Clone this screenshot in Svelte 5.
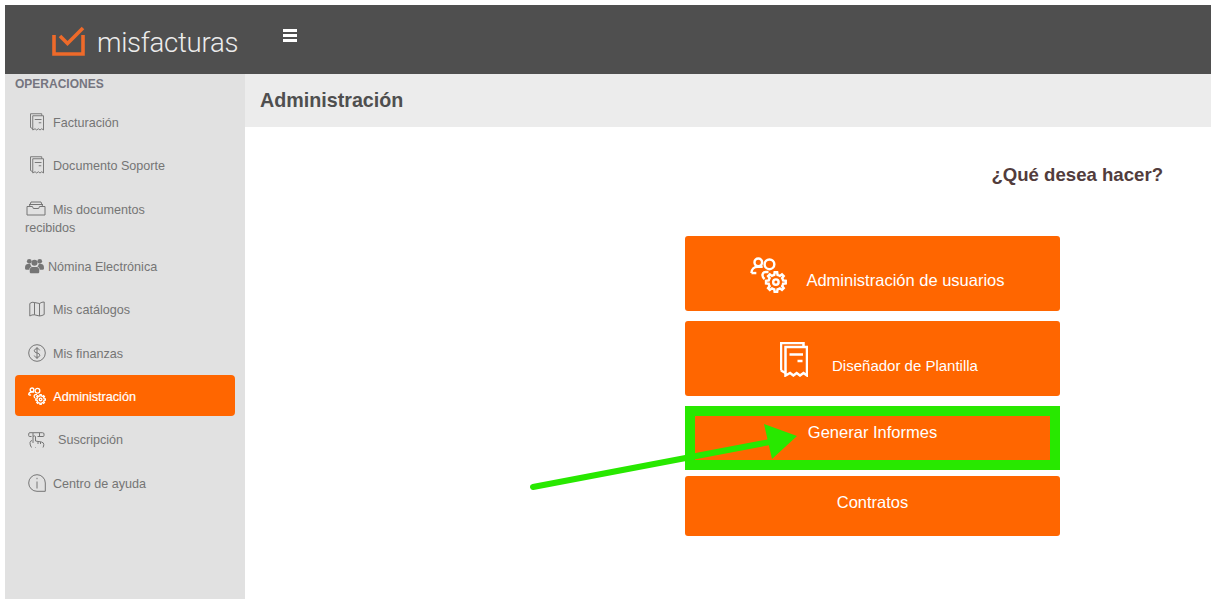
<script>
  function gearPath(cx, cy, ro, ri, n) {
    let d = '';
    const step = (Math.PI * 2) / n;
    for (let i = 0; i < n; i++) {
      const a = i * step - Math.PI / 2;
      const pts = [
        [ri, a - step * 0.5],
        [ri, a - step * 0.28],
        [ro, a - step * 0.16],
        [ro, a + step * 0.16],
        [ri, a + step * 0.28]
      ];
      for (const [r, t] of pts) {
        d += (d ? 'L' : 'M') + (cx + r * Math.cos(t)).toFixed(2) + ' ' + (cy + r * Math.sin(t)).toFixed(2);
      }
    }
    return d + 'Z';
  }
  const gear = gearPath(26.6, 25.8, 10.2, 7.6, 8);
  const items = [
    { label: 'Facturación', icon: 'receipt' },
    { label: 'Documento Soporte', icon: 'receipt' },
    { label: 'Mis documentos recibidos', icon: 'inbox', tall: true },
    { label: 'Nómina Electrónica', icon: 'people' },
    { label: 'Mis catálogos', icon: 'map' },
    { label: 'Mis finanzas', icon: 'dollar' },
    { label: 'Administración', icon: 'admin', active: true },
    { label: 'Suscripción', icon: 'hand' },
    { label: 'Centro de ayuda', icon: 'info' }
  ];
</script>

{#snippet receiptIcon(cls)}
  <svg class={cls} viewBox="0 0 28 35" aria-hidden="true">
    <path d="M1 28.500V1H23.500V5" />
    <path d="M1 28.500l4.500 2.500" />
    <path d="M5.500 33.500V5H27V33.500l-3.500-2.500-3.500 2.500-3.300-2.500-3.300 2.500-3.300-2.500z" />
    <path d="M9.500 12.500H23M17.500 19H22.500" />
  </svg>
{/snippet}

{#snippet usersGearIcon(cls)}
  <svg class={cls} viewBox="0 0 38 37" aria-hidden="true">
    <circle cx="8.500" cy="5.500" r="3.900" />
    <circle cx="20" cy="7.500" r="5" />
    <path d="M1.500 16.500c0-4 3-6.500 6.500-6.500h5" />
    <path d="M1.500 16.500h5" />
    <path d="M19 15.500h-3c-3.500 0-4.500 4.500-1 7" />
    <path d={gear} />
    <circle cx="26.600" cy="25.800" r="2.800" />
  </svg>
{/snippet}

<div class="page">
  <header class="topbar">
    <div class="brand">
      <svg class="logo" viewBox="0 0 33 30" aria-hidden="true">
        <path d="M2 9V28H31V9" />
        <path d="M8 10l7.500 7.500L31 2" />
      </svg>
      <span class="wordmark">misfacturas</span>
    </div>
    <div class="burger" aria-label="menu"><i></i><i></i><i></i></div>
  </header>

  <div class="body">
    <aside class="sidebar">
      <div class="section">OPERACIONES</div>
      <nav>
        {#each items as item}
          <div class="item {item.icon}" class:active={item.active} class:tall={item.tall}>
            <span class="line">
              {#if item.icon === 'receipt'}
                {@render receiptIcon('ic')}
              {:else if item.icon === 'admin'}
                {@render usersGearIcon('ic')}
              {:else if item.icon === 'inbox'}
                <svg class="ic" viewBox="0 0 20 15" aria-hidden="true">
                  <path d="M3.500 5 5 1h10l1.500 4M3 3.500h14M1 5.500h5.500l.8 2h5.400l.8-2H19v8.500H1z" />
                </svg>
              {:else if item.icon === 'people'}
                <svg class="ic" viewBox="0 0 20 16" aria-hidden="true">
                  <g class="solid">
                    <circle cx="4.500" cy="3" r="2.500" /><circle cx="15.500" cy="3" r="2.500" /><circle cx="10" cy="4.500" r="3.200" />
                    <path d="M0 10c0-3 1.500-4 3-4h2.500c.2 1.200.8 2 1.500 2.500-1.500.7-2.500 1.800-2.500 3.500h-3C.5 12 0 11 0 10zM20 10c0-3-1.500-4-3-4h-2.500c-.2 1.200-.8 2-1.500 2.500 1.500.7 2.500 1.800 2.500 3.500h3c1 0 1.500-1 1.500-2zM7.500 9h5c1.500 0 2.500 1.500 2.500 3.500v1.700c0 .8-.7 1.500-1.500 1.500h-7c-.8 0-1.500-.7-1.500-1.500v-1.700C5 10.500 6 9 7.500 9z" />
                  </g>
                </svg>
              {:else if item.icon === 'map'}
                <svg class="ic" viewBox="0 0 16 16" aria-hidden="true">
                  <path d="M.8 15V2.500Q3 .5 5.500 1.500L10.500 2.500Q13 .8 15.200 1V13.500Q13 14.800 10.500 15L5.500 13.800Q3 13.500.8 15zM5.500 1.500V13.800M10.500 2.500V15" />
                </svg>
              {:else if item.icon === 'dollar'}
                <svg class="ic" viewBox="0 0 18 18" aria-hidden="true">
                  <circle cx="9" cy="9" r="8.300" />
                  <path d="M11.700 6.300C11.300 5.200 10.300 4.700 9 4.700c-1.500 0-2.700.8-2.700 2.100 0 2.900 5.500 1.400 5.500 4.400 0 1.300-1.200 2.100-2.800 2.100-1.400 0-2.400-.6-2.800-1.700M9 3v12" />
                </svg>
              {:else if item.icon === 'hand'}
                <svg class="ic" viewBox="0 0 17 16" aria-hidden="true">
                  <path d="M3.500 4.500H1.500Q.7 4.500.7 3.500V1.800Q.7 .7 2 .7H14.500Q16 .7 16 2V3.500Q16 4.500 15 4.500H9.500M5 1v3.500M11.500 1v3" />
                  <path d="M3.500 15.500Q1.800 13 2 10.500 2.200 9 4 8.500M7.500 15.500V15M5 11V4.500Q6.200 3.200 7.500 4.500V9L13.500 10Q15.800 10.500 15.800 12.500 15.800 14 15 15.500M10 9.500V12M12.500 10V12" />
                </svg>
              {:else}
                <svg class="ic" viewBox="0 0 18 18" aria-hidden="true">
                  <path d="M9 .7a8.300 8.300 0 1 0 0 16.600h8.300V9A8.300 8.300 0 0 0 9 .7z" />
                  <path d="M9 7.500v7M9 3.800v1.400" />
                </svg>
              {/if}
              {item.label}
            </span>
          </div>
        {/each}
      </nav>
    </aside>

    <main class="content">
      <div class="title-bar"><h1>Administración</h1></div>
      <p class="question">¿Qué desea hacer?</p>
      <div class="actions">
        <button class="action big users">
          {@render usersGearIcon('big-ic')}
          <span>Administración de usuarios</span>
        </button>
        <button class="action big doc">
          {@render receiptIcon('big-ic')}
          <span class="small">Diseñador de Plantilla</span>
        </button>
        <button class="action top"><span>Generar Informes</span></button>
        <button class="action last"><span>Contratos</span></button>
      </div>
    </main>
  </div>

  <div class="highlight"></div>
  <svg class="arrow" viewBox="0 0 1216 604" aria-hidden="true">
    <line x1="533" y1="487" x2="775" y2="441" />
    <polygon points="764,424 797,436 772,459" />
  </svg>
</div>

<style>
  :global(body) {
    margin: 0;
    background: #fff;
    font-family: "Liberation Sans", Arial, sans-serif;
  }
  .page {
    position: relative;
    box-sizing: border-box;
    width: 1216px;
    height: 604px;
    padding: 5px;
    display: flex;
    flex-direction: column;
    overflow: hidden;
  }
  .topbar {
    height: 69px;
    flex: none;
    background: #4f4f4f;
    display: flex;
    align-items: flex-start;
  }
  .brand {
    display: flex;
    align-items: center;
    width: 278px;
    height: 69px;
    padding-left: 47px;
    box-sizing: border-box;
  }
  .logo {
    width: 33px;
    height: 30px;
    margin-right: 12px;
    position: relative;
    top: 1px;
    fill: none;
    stroke: #ee6a2a;
    stroke-width: 3.600;
  }
  .wordmark {
    font-family: Roboto, sans-serif;
    font-weight: 300;
    font-size: 27.600px;
    letter-spacing: -0.300px;
    color: #ececec;
    position: relative;
    top: 3px;
  }
  .burger {
    margin-top: 24px;
    width: 14px;
    display: flex;
    flex-direction: column;
    gap: 2px;
  }
  .burger i {
    display: block;
    height: 3px;
    background: #fff;
  }
  .body {
    flex: 1;
    display: flex;
    min-height: 0;
  }
  .sidebar {
    width: 240px;
    flex: none;
    background: #e1e1e1;
    padding: 3px 10px 0;
    box-sizing: border-box;
    color: #757575;
    font-size: 12.600px;
  }
  .section {
    font-weight: 700;
    font-size: 12px;
    line-height: 14px;
    color: #75757f;
    margin-bottom: 10px;
  }
  nav {
    display: flex;
    flex-direction: column;
    gap: 2.400px;
  }
  .item {
    height: 41px;
    display: flex;
    align-items: center;
    padding: 2px 0 0 13px;
    border-radius: 4px;
    box-sizing: border-box;
    line-height: 18px;
  }
  .item.tall {
    height: 55px;
    padding: 7px 60px 0 10px;
  }
  .item.active {
    background: #ff6600;
    color: #fff;
    -webkit-text-stroke: 0.200px #fff;
  }
  .ic {
    width: 18px;
    height: 18px;
    vertical-align: -4px;
    margin-right: 3.500px;
    fill: none;
    stroke: currentColor;
    stroke-width: 1;
  }
  .receipt {
    padding-left: 15px;
  }
  .receipt .ic {
    width: 14px;
    height: 18px;
    margin-right: 5.500px;
    stroke-width: 1.900;
  }
  .inbox .ic {
    width: 20px;
    height: 15px;
    margin: 0 3.500px 0 1px;
    vertical-align: -2px;
  }
  .people {
    padding-left: 10px;
  }
  .people .ic {
    width: 19px;
    height: 16px;
    margin-right: 0.500px;
    vertical-align: -3px;
  }
  .solid {
    fill: currentColor;
    stroke: none;
  }
  .map {
    padding-left: 14px;
  }
  .map .ic {
    width: 16px;
    height: 16px;
    margin-right: 4.500px;
    vertical-align: -3px;
  }
  .admin .ic {
    margin-right: 4.500px;
    stroke-width: 2.800;
  }
  .hand .ic {
    width: 17px;
    height: 16px;
    margin-right: 9.500px;
    vertical-align: -4px;
  }
  .content {
    flex: 1;
    min-width: 0;
  }
  .title-bar {
    height: 53px;
    background: #ececec;
    display: flex;
    align-items: center;
    padding-left: 15px;
  }
  h1 {
    margin: 0;
    font-size: 19.700px;
    font-weight: 700;
    color: #4f4f4f;
  }
  .question {
    margin: 35px 48px 0 0;
    text-align: right;
    font-size: 18.600px;
    line-height: 25px;
    font-weight: 700;
    color: #523c3c;
  }
  .actions {
    width: 375px;
    margin: 49px 0 0 440px;
    display: flex;
    flex-direction: column;
    gap: 10px;
  }
  .action {
    height: 60px;
    border: 0;
    padding: 0;
    border-radius: 3px;
    background: #ff6600;
    color: #fff;
    font: inherit;
    font-size: 16.500px;
    display: flex;
    align-items: center;
    justify-content: center;
  }
  .action.big {
    height: 75px;
  }
  .action.big span {
    position: relative;
    top: 7px;
  }
  .action.big .small {
    font-size: 15px;
  }
  .action.users {
    padding-left: 10px;
    gap: 19px;
  }
  .action.doc {
    padding-left: 13px;
    gap: 24px;
  }
  .action.top {
    align-items: flex-start;
  }
  .action.top span {
    margin-top: 17px;
  }
  .action.last span {
    margin-top: -8px;
  }
  .big-ic {
    margin-top: 2px;
    fill: none;
    stroke: #fff;
    stroke-width: 2.500;
  }
  .users .big-ic {
    width: 37px;
    height: 36px;
  }
  .doc .big-ic {
    width: 28px;
    height: 35px;
  }
  .highlight {
    position: absolute;
    left: 685px;
    top: 406px;
    width: 375px;
    height: 64px;
    box-sizing: border-box;
    border: 10px solid #28e800;
  }
  .arrow {
    position: absolute;
    inset: 0;
    width: 1216px;
    height: 604px;
    pointer-events: none;
  }
  .arrow line {
    stroke: #28e800;
    stroke-width: 6;
    stroke-linecap: round;
  }
  .arrow polygon {
    fill: #28e800;
  }
</style>
